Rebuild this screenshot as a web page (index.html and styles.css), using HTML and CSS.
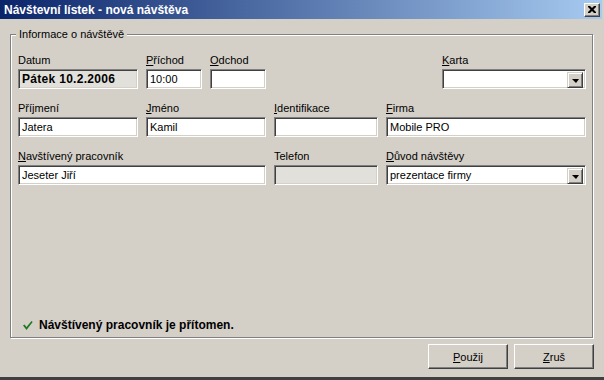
FILE: index.html
```html
<!DOCTYPE html>
<html>
<head>
<meta charset="utf-8">
<title>Návštevní lístek</title>
<link rel="stylesheet" href="styles.css">
</head>
<body>
<div class="window">
    <div class="titlebar">
        <span class="title">Návštevní lístek - nová návštěva</span>
        <span class="closeBtn">
            <svg width="8" height="7" viewBox="0 0 8 7"><path d="M0 0h2l2 2 2-2h2v1l-2.5 2.5 2.5 2.5v1h-2l-2-2-2 2h-2v-1l2.5-2.5-2.5-2.5z" fill="#000"/></svg>
        </span>
    </div>
    <div class="client">
        <div class="group">
            <span class="legend">Informace o návštěvě</span>
            <div class="grid">
                <div class="cell col1">
                    <div class="lbl">Datum</div>
                    <div class="edit grey bold">Pátek 10.2.2006</div>
                </div>
                <div class="cell col2">
                    <div class="lbl"><u>P</u>říchod</div>
                    <div class="edit">10:00</div>
                </div>
                <div class="cell col3">
                    <div class="lbl"><u>O</u>dchod</div>
                    <div class="edit"></div>
                </div>
                <div class="cell col6">
                    <div class="lbl"><u>K</u>arta</div>
                    <div class="edit combo"><span class="val"></span><span class="dropBtn"><i></i></span></div>
                </div>

                <div class="cell col1">
                    <div class="lbl">Pří<u>j</u>mení</div>
                    <div class="edit">Jatera</div>
                </div>
                <div class="cell col2to3">
                    <div class="lbl"><u>J</u>méno</div>
                    <div class="edit">Kamil</div>
                </div>
                <div class="cell col4">
                    <div class="lbl"><u>I</u>dentifikace</div>
                    <div class="edit"></div>
                </div>
                <div class="cell col5to6">
                    <div class="lbl"><u>F</u>irma</div>
                    <div class="edit">Mobile PRO</div>
                </div>

                <div class="cell col1to3">
                    <div class="lbl"><u>N</u>avštívený pracovník</div>
                    <div class="edit">Jeseter Jiří</div>
                </div>
                <div class="cell col4">
                    <div class="lbl">Telefon</div>
                    <div class="edit grey"></div>
                </div>
                <div class="cell col5to6">
                    <div class="lbl"><u>D</u>ůvod návštěvy</div>
                    <div class="edit combo"><span class="val">prezentace firmy</span><span class="dropBtn"><i></i></span></div>
                </div>
            </div>
            <div class="status">
                <svg class="check" width="10" height="9" viewBox="0 0 10 9"><path d="M0 4.5l1.5-1 2 2.5 5-6 1.2 1-6.2 8z" fill="#1f7a1f"/></svg>
                <span>Návštívený pracovník je přítomen.</span>
            </div>
        </div>
        <div class="buttons">
            <span class="btn"><u>P</u>oužij</span>
            <span class="btn"><u>Z</u>ruš</span>
        </div>
    </div>
</div>
</body>
</html>
```

FILE: styles.css
```css
body
{
    margin: 0;
    background: #d4d0c8;
    font-family: "Liberation Sans", Arial, sans-serif;
    font-size: 11px;
    color: #000;
}

.window
{
    width: 604px;
    height: 380px;
    box-sizing: border-box;
    display: flex;
    flex-direction: column;
    background: #d4d0c8;
    border-bottom: 3px solid #404040;
}

/* title bar */
.titlebar
{
    height: 19px;
    margin-right: 2px;
    padding: 0 2px 0 4px;
    display: flex;
    align-items: center;
    justify-content: space-between;
    background: linear-gradient(to right, #0a246a, #a6caf0);
}
.title
{
    color: #fff;
    font-weight: bold;
    font-size: 12px;
}
.closeBtn
{
    width: 16px;
    height: 14px;
    box-sizing: border-box;
    display: flex;
    align-items: center;
    justify-content: center;
    background: #d4d0c8;
    border: 1px solid;
    border-color: #fff #404040 #404040 #fff;
    box-shadow: inset -1px -1px 0 #808080;
}

.client
{
    flex: 1;
    display: flex;
    flex-direction: column;
    padding: 15px 0 0 10px;
}

/* group box */
.group
{
    position: relative;
    width: 583px;
    height: 304px;
    box-sizing: border-box;
    border: 1px solid #808080;
    box-shadow: 1px 1px 0 #fff, inset 1px 1px 0 #fff;
    display: flex;
    flex-direction: column;
}
.legend
{
    position: absolute;
    top: -7px;
    left: 5px;
    padding: 0 3px;
    line-height: 13px;
    background: #d4d0c8;
}

.grid
{
    display: grid;
    grid-template-columns: 120px 56px 56px 104px 48px 144px;
    column-gap: 8px;
    row-gap: 13px;
    padding: 19px 0 0 7px;
}
.col1 { grid-column: 1; }
.col2 { grid-column: 2; }
.col3 { grid-column: 3; }
.col4 { grid-column: 4; }
.col6 { grid-column: 6; }
.col2to3 { grid-column: 2 / 4; }
.col1to3 { grid-column: 1 / 4; }
.col5to6 { grid-column: 5 / 7; }

.lbl
{
    line-height: 13px;
    margin-bottom: 2px;
    white-space: nowrap;
}

/* sunken edit box */
.edit
{
    height: 20px;
    box-sizing: border-box;
    background: #fff;
    border: 1px solid;
    border-color: #808080 #fff #fff #808080;
    box-shadow: inset 1px 1px 0 #404040, inset -1px -1px 0 #d4d0c8;
    padding: 0 2px 0 3px;
    line-height: 18px;
    white-space: nowrap;
    overflow: hidden;
}
.edit.grey
{
    background: #e2e0db;
}
.edit.bold
{
    font-weight: bold;
    font-size: 12px;
    letter-spacing: 0.3px;
}

.combo
{
    display: flex;
    padding: 2px 2px 2px 3px;
    line-height: 16px;
}
.combo .val
{
    flex: 1;
    line-height: 15px;
}
.dropBtn
{
    width: 16px;
    height: 16px;
    box-sizing: border-box;
    display: flex;
    align-items: center;
    justify-content: center;
    background: #d4d0c8;
    border: 1px solid;
    border-color: #d4d0c8 #404040 #404040 #d4d0c8;
    box-shadow: inset 1px 1px 0 #fff, inset -1px -1px 0 #808080;
}
.dropBtn i
{
    width: 0;
    height: 0;
    border-left: 4px solid transparent;
    border-right: 3px solid transparent;
    border-top: 4px solid #000;
    margin-top: 1px;
}

/* status line */
.status
{
    margin-top: auto;
    margin-bottom: 5px;
    padding-left: 12px;
    display: flex;
    align-items: center;
    gap: 6px;
    line-height: 14px;
    font-weight: bold;
    font-size: 12px;
}

/* buttons */
.buttons
{
    display: flex;
    justify-content: flex-end;
    gap: 6px;
    margin-top: 6px;
    padding-right: 10px;
}
.btn
{
    width: 80px;
    height: 25px;
    box-sizing: border-box;
    display: flex;
    align-items: center;
    justify-content: center;
    border: 1px solid;
    border-color: #fff #404040 #404040 #fff;
    box-shadow: inset -1px -1px 0 #808080;
}
```
